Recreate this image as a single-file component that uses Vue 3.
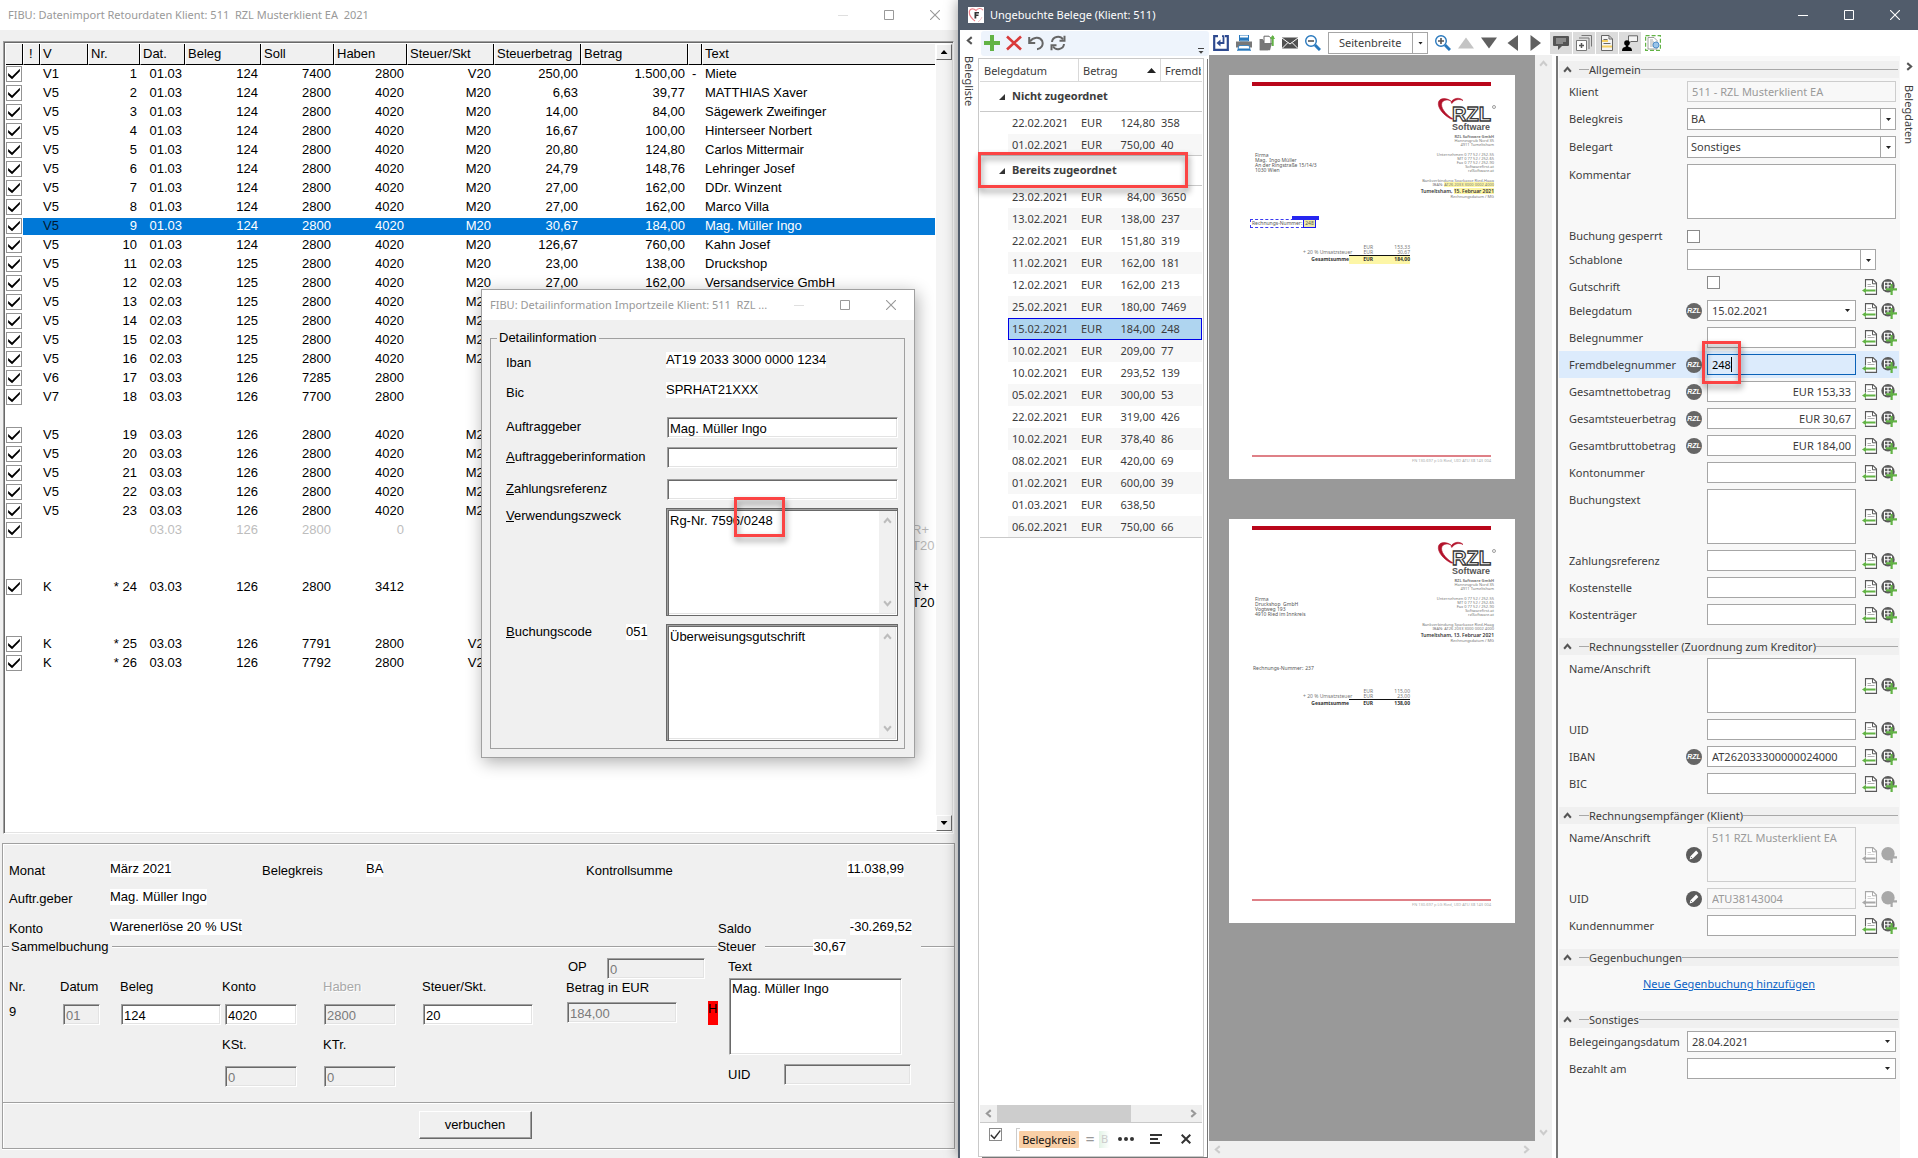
<script setup>
const entry = (v, nr, dat, beleg, soll, haben, skt = '', tax = '', amount = '', sign = '', text = '', extra = {}) =>
  ({ v, nr, dat, beleg, soll, haben, skt, tax, amount, sign, text, lines: 1, ...extra })

const entries = [
  entry('V1', '1', '01.03', '124', '7400', '2800', 'V20', '250,00', '1.500,00', '-', 'Miete'),
  entry('V5', '2', '01.03', '124', '2800', '4020', 'M20', '6,63', '39,77', '', 'MATTHIAS Xaver'),
  entry('V5', '3', '01.03', '124', '2800', '4020', 'M20', '14,00', '84,00', '', 'Sägewerk Zweifinger'),
  entry('V5', '4', '01.03', '124', '2800', '4020', 'M20', '16,67', '100,00', '', 'Hinterseer Norbert'),
  entry('V5', '5', '01.03', '124', '2800', '4020', 'M20', '20,80', '124,80', '', 'Carlos Mittermair'),
  entry('V5', '6', '01.03', '124', '2800', '4020', 'M20', '24,79', '148,76', '', 'Lehringer Josef'),
  entry('V5', '7', '01.03', '124', '2800', '4020', 'M20', '27,00', '162,00', '', 'DDr. Winzent'),
  entry('V5', '8', '01.03', '124', '2800', '4020', 'M20', '27,00', '162,00', '', 'Marco Villa'),
  entry('V5', '9', '01.03', '124', '2800', '4020', 'M20', '30,67', '184,00', '', 'Mag. Müller Ingo', { selected: true }),
  entry('V5', '10', '01.03', '124', '2800', '4020', 'M20', '126,67', '760,00', '', 'Kahn Josef'),
  entry('V5', '11', '02.03', '125', '2800', '4020', 'M20', '23,00', '138,00', '', 'Druckshop'),
  entry('V5', '12', '02.03', '125', '2800', '4020', 'M20', '27,00', '162,00', '', 'Versandservice GmbH'),
  entry('V5', '13', '02.03', '125', '2800', '4020', 'M20'),
  entry('V5', '14', '02.03', '125', '2800', '4020', 'M20'),
  entry('V5', '15', '02.03', '125', '2800', '4020', 'M20'),
  entry('V5', '16', '02.03', '125', '2800', '4020', 'M20'),
  entry('V6', '17', '03.03', '126', '7285', '2800'),
  entry('V7', '18', '03.03', '126', '7700', '2800', '', '', '', '', '', { lines: 2 }),
  entry('V5', '19', '03.03', '126', '2800', '4020', 'M20'),
  entry('V5', '20', '03.03', '126', '2800', '4020', 'M20'),
  entry('V5', '21', '03.03', '126', '2800', '4020', 'M20'),
  entry('V5', '22', '03.03', '126', '2800', '4020', 'M20'),
  entry('V5', '23', '03.03', '126', '2800', '4020', 'M20'),
  entry('', '', '03.03', '126', '2800', '0', '', '', '', '', '', { lines: 3, muted: true, tail: true }),
  entry('K', '* 24', '03.03', '126', '2800', '3412', '', '', '', '', '', { lines: 3, tail: true }),
  entry('K', '* 25', '03.03', '126', '7791', '2800', 'V20'),
  entry('K', '* 26', '03.03', '126', '7792', '2800', 'V20'),
]

const groups = [
  { title: 'Nicht zugeordnet', rows: [['22.02.2021', '124,80', '358'], ['01.02.2021', '750,00', '40']] },
  {
    title: 'Bereits zugeordnet', marked: true,
    rows: [
      ['23.02.2021', '84,00', '3650'], ['13.02.2021', '138,00', '237'], ['22.02.2021', '151,80', '319'],
      ['11.02.2021', '162,00', '181'], ['12.02.2021', '162,00', '213'], ['25.02.2021', '180,00', '7469'],
      ['15.02.2021', '184,00', '248'], ['10.02.2021', '209,00', '77'], ['10.02.2021', '293,52', '139'],
      ['05.02.2021', '300,00', '53'], ['22.02.2021', '319,00', '426'], ['10.02.2021', '378,40', '86'],
      ['08.02.2021', '420,00', '69'], ['01.02.2021', '600,00', '39'], ['01.03.2021', '638,50', ''],
      ['06.02.2021', '750,00', '66'],
    ],
  },
]

const pages = [
  {
    address: ['Firma', 'Mag.  Ingo Müller', 'An der Ringstraße 15/14/3', '1030 Wien'],
    date: '15. Februar 2021', number: '248', marked: true,
    net: '153,33', tax: '30,67', total: '184,00',
  },
  {
    address: ['Firma', 'Druckshop  GmbH', 'Vogtweg 193', '4910 Ried im Innkreis'],
    date: '13. Februar 2021', number: '237', marked: false,
    net: '115,00', tax: '23,00', total: '138,00',
  },
]

const sections = [
  {
    title: 'Allgemein',
    fields: [
      { label: 'Klient', kind: 'text', value: '511 - RZL Musterklient EA', disabled: true },
      { label: 'Belegkreis', kind: 'select', value: 'BA' },
      { label: 'Belegart', kind: 'select', value: 'Sonstiges' },
      { label: 'Kommentar', kind: 'area', value: '' },
      { label: 'Buchung gesperrt', kind: 'check' },
      { label: 'Schablone', kind: 'select', value: '', narrow: true },
      { label: 'Gutschrift', kind: 'check', source: true },
      { label: 'Belegdatum', kind: 'date', value: '15.02.2021', source: true, badge: 'rzl' },
      { label: 'Belegnummer', kind: 'text', value: '', source: true },
      { label: 'Fremdbelegnummer', kind: 'text', value: '248', source: true, badge: 'rzl', active: true },
      { label: 'Gesamtnettobetrag', kind: 'text', value: 'EUR 153,33', source: true, badge: 'rzl', right: true },
      { label: 'Gesamtsteuerbetrag', kind: 'text', value: 'EUR 30,67', source: true, badge: 'rzl', right: true },
      { label: 'Gesamtbruttobetrag', kind: 'text', value: 'EUR 184,00', source: true, badge: 'rzl', right: true },
      { label: 'Kontonummer', kind: 'text', value: '', source: true },
      { label: 'Buchungstext', kind: 'area', value: '', source: true },
      { label: 'Zahlungsreferenz', kind: 'text', value: '', source: true },
      { label: 'Kostenstelle', kind: 'text', value: '', source: true },
      { label: 'Kostenträger', kind: 'text', value: '', source: true },
    ],
  },
  {
    title: 'Rechnungssteller (Zuordnung zum Kreditor)',
    fields: [
      { label: 'Name/Anschrift', kind: 'area', value: '', source: true },
      { label: 'UID', kind: 'text', value: '', source: true },
      { label: 'IBAN', kind: 'text', value: 'AT262033300000024000', source: true, badge: 'rzl' },
      { label: 'BIC', kind: 'text', value: '', source: true },
    ],
  },
  {
    title: 'Rechnungsempfänger (Klient)',
    fields: [
      { label: 'Name/Anschrift', kind: 'area', value: '511 RZL Musterklient EA', source: true, badge: 'edit', disabled: true },
      { label: 'UID', kind: 'text', value: 'ATU38143004', source: true, badge: 'edit', disabled: true },
      { label: 'Kundennummer', kind: 'text', value: '', source: true },
    ],
  },
  { title: 'Gegenbuchungen', link: 'Neue Gegenbuchung hinzufügen', fields: [] },
  {
    title: 'Sonstiges',
    fields: [
      { label: 'Belegeingangsdatum', kind: 'date', value: '28.04.2021' },
      { label: 'Bezahlt am', kind: 'date', value: '' },
    ],
  },
]
</script>

<template>
  <svg class="defs" width="0" height="0" aria-hidden="true">
    <symbol id="i-min" viewBox="0 0 10 10"><path d="M0 5.5h10" stroke="currentColor" /></symbol>
    <symbol id="i-max" viewBox="0 0 10 10"><path d="M.5.5h9v9h-9z" fill="none" stroke="currentColor" /></symbol>
    <symbol id="i-close" viewBox="0 0 10 10"><path d="M0 0l10 10M10 0L0 10" fill="none" stroke="currentColor" stroke-width="1.1" /></symbol>
    <symbol id="i-chev" viewBox="0 0 8 8"><path d="M1 6l3-3.5L7 6" fill="none" stroke="currentColor" stroke-width="1.8" /></symbol>
    <symbol id="i-doc" viewBox="0 0 16 16">
      <path d="M3.500 8.500V.6h7.500l3.500 3.500v11.300h-11v-1.200" fill="#fff" stroke="currentColor" stroke-width="1.100" />
      <path d="M10.500.8v4h3.800" fill="none" stroke="currentColor" />
      <path d="M5.500 5.500h3.500M5.500 7.500h7" stroke="currentColor" stroke-width=".7" opacity=".7" />
      <path class="accent" d="M0 11.500l4-2.700v1.800h9.500v1.800H4v1.800z" />
    </symbol>
    <symbol id="i-globe" viewBox="0 0 16 16">
      <circle cx="7" cy="6.800" r="6.700" fill="currentColor" />
      <path class="mesh" d="M3.500 3.200h7v7h-7zM3.500 6.700h7M7 3.200v7" fill="none" stroke-width="1.100" />
      <path class="accent" d="M9.500 5h2.200v4.300H16v2.200h-4.300V16H9.500v-4.500H5V9.300h4.500z" />
    </symbol>
    <symbol id="i-edit" viewBox="0 0 16 16">
      <circle cx="8" cy="8" r="8" fill="#5c5c5c" />
      <path d="M3.600 12.400l.9-3.200 5.600-5.600 2.300 2.300-5.600 5.600z" fill="#fff" />
      <path d="M4.800 9.800l1.500 1.500" stroke="#5c5c5c" stroke-width=".8" />
    </symbol>
  </svg>

  <div class="desktop">
    <main class="fibu">
      <header class="titlebar">
        <h1>FIBU: Datenimport Retourdaten Klient: 511&nbsp; RZL Musterklient EA&nbsp; 2021</h1>
        <div class="winbtns">
          <button type="button" class="faint" aria-label="Minimieren"><svg><use href="#i-min" /></svg></button>
          <button type="button" aria-label="Maximieren"><svg><use href="#i-max" /></svg></button>
          <button type="button" aria-label="Schließen"><svg><use href="#i-close" /></svg></button>
        </div>
      </header>

      <div class="fibu-body">
        <div class="frame">
          <div class="frame-scroll">
            <table class="entries">
              <colgroup>
                <col class="c-check" /><col class="c-flag" /><col class="c-v" /><col class="c-nr" /><col class="c-dat" />
                <col class="c-beleg" /><col class="c-acct" /><col class="c-acct" /><col class="c-tax" /><col class="c-tax" />
                <col class="c-amount" /><col class="c-sign" /><col />
              </colgroup>
              <thead>
                <tr>
                  <th></th><th class="flag">!</th><th>V</th><th>Nr.</th><th>Dat.</th><th>Beleg</th><th>Soll</th><th>Haben</th>
                  <th>Steuer/Skt</th><th>Steuerbetrag</th><th>Betrag</th><th></th><th>Text</th>
                </tr>
              </thead>
              <tbody>
                <tr v-for="(e, i) in entries" :key="i" :class="['l' + e.lines, { selected: e.selected, muted: e.muted }]">
                  <td class="tick"><input type="checkbox" class="box" checked :aria-label="'Zeile ' + (i + 1)" /></td>
                  <td></td>
                  <td class="v">{{ e.v }}</td>
                  <td class="n">{{ e.nr }}</td>
                  <td class="n">{{ e.dat }}</td>
                  <td class="n">{{ e.beleg }}</td>
                  <td class="n">{{ e.soll }}</td>
                  <td class="n">{{ e.haben }}</td>
                  <td class="n">{{ e.skt }}</td>
                  <td class="n">{{ e.tax }}</td>
                  <td class="n">{{ e.amount }}</td>
                  <td class="sign">{{ e.sign }}</td>
                  <td>{{ e.text }}<span v-if="e.tail" class="tail">R+<br />T20</span></td>
                </tr>
              </tbody>
            </table>
          </div>
          <div class="classic-scroll">
            <button type="button" class="up" aria-label="Nach oben"></button>
            <button type="button" class="down" aria-label="Nach unten"></button>
          </div>
        </div>

        <section class="booking">
          <div class="summary">
            <span>Monat</span><b><mark>März 2021</mark></b>
            <span>Belegkreis</span><b><mark>BA</mark></b>
            <span>Kontrollsumme</span><b class="sum"><mark>11.038,99</mark></b>
            <span>Auftr.geber</span><b class="wide"><mark>Mag. Müller Ingo</mark></b>
            <span>Konto</span><b class="mid"><mark>Warenerlöse 20 % USt</mark></b>
            <span class="saldo">Saldo</span><b class="end"><mark>-30.269,52</mark></b>
          </div>
          <div class="rule">
            <i class="stub"></i><span>Sammelbuchung</span><i class="grow"></i>
            <span class="tax-label">Steuer</span><i class="short"></i><mark>30,67</mark><span class="gap"></span><i class="rest"></i>
          </div>
          <form class="posting" @submit.prevent>
            <div class="f f-nr"><label>Nr.</label><output>9</output></div>
            <div class="f f-date"><label for="p-datum">Datum</label><input id="p-datum" class="sunk" value="01" disabled /></div>
            <div class="f f-beleg"><label for="p-beleg">Beleg</label><input id="p-beleg" class="sunk" value="124" /></div>
            <div class="f f-konto">
              <label for="p-konto">Konto</label><input id="p-konto" class="sunk" value="4020" />
              <label for="p-kst" class="second">KSt.</label><input id="p-kst" class="sunk" value="0" disabled />
            </div>
            <div class="f f-haben">
              <label for="p-haben" class="off">Haben</label><input id="p-haben" class="sunk" value="2800" disabled />
              <label for="p-ktr" class="second">KTr.</label><input id="p-ktr" class="sunk" value="0" disabled />
            </div>
            <div class="f f-skt"><label for="p-skt">Steuer/Skt.</label><input id="p-skt" class="sunk" value="20" /></div>
            <div class="f-amount">
              <div class="op"><label for="p-op">OP</label><input id="p-op" class="sunk" value="0" disabled /></div>
              <label for="p-betrag">Betrag in EUR</label>
              <input id="p-betrag" class="sunk" value="184,00" disabled />
            </div>
            <span class="side">H</span>
            <div class="f-text">
              <label for="p-text">Text</label>
              <textarea id="p-text" class="sunk">Mag. Müller Ingo</textarea>
              <div class="uid"><label for="p-uid">UID</label><input id="p-uid" class="sunk" disabled /></div>
            </div>
          </form>
          <div class="actions"><button type="button">verbuchen</button></div>
        </section>
      </div>

      <section class="dialog" role="dialog" aria-label="Detailinformation">
        <header class="titlebar">
          <h2>FIBU: Detailinformation Importzeile Klient: 511&nbsp; RZL ...</h2>
          <div class="winbtns">
            <button type="button" class="faint" aria-label="Minimieren"><svg><use href="#i-min" /></svg></button>
            <button type="button" aria-label="Maximieren"><svg><use href="#i-max" /></svg></button>
            <button type="button" aria-label="Schließen"><svg><use href="#i-close" /></svg></button>
          </div>
        </header>
        <fieldset>
          <legend>Detailinformation</legend>
          <div class="d plain first"><span>Iban</span><p><mark>AT19 2033 3000 0000 1234</mark></p></div>
          <div class="d plain last"><span>Bic</span><p><mark>SPRHAT21XXX</mark></p></div>
          <div class="d"><label for="d-auf">Auftraggeber</label><input id="d-auf" class="sunk" value="Mag. Müller Ingo" /></div>
          <div class="d"><label for="d-inf"><u>A</u>uftraggeberinformation</label><input id="d-inf" class="sunk" /></div>
          <div class="d ref"><label for="d-ref"><u>Z</u>ahlungsreferenz</label><input id="d-ref" class="sunk" /></div>
          <div class="d memo">
            <label for="d-zweck"><u>V</u>erwendungszweck</label>
            <div class="scrollbox">
              <textarea id="d-zweck">Rg-Nr. 7596/0248</textarea>
              <span class="bar"><svg><use href="#i-chev" /></svg><svg class="flip"><use href="#i-chev" /></svg></span>
              <span class="hilite h-ref"></span>
            </div>
          </div>
          <div class="d memo code">
            <label for="d-code"><u>B</u>uchungscode</label><mark class="code-no">051</mark>
            <div class="scrollbox">
              <textarea id="d-code">Überweisungsgutschrift</textarea>
              <span class="bar"><svg><use href="#i-chev" /></svg><svg class="flip"><use href="#i-chev" /></svg></span>
            </div>
          </div>
        </fieldset>
      </section>
    </main>

    <div class="belege">
      <header class="titlebar dark">
        <svg class="app" viewBox="0 0 16 16">
          <path d="M0 0h16v16H0z" fill="#fff" />
          <path d="M7 14C3 11 .8 7 1.500 4 2.200 1.500 5.500 1 8 3.500 9.500 1 13.500.8 15 3.200" fill="none" stroke="#ee7f88" stroke-width="1.200" />
          <path d="M6.500 5h4.500v1.400H8.300v1.200h2.200V9H8.300v2.500H6.500z" fill="#333" />
          <path d="M14 10q-1 3-4 5" fill="none" stroke="#f3b0b5" stroke-width=".8" />
        </svg>
        <h1>Ungebuchte Belege (Klient: 511)</h1>
        <div class="winbtns">
          <button type="button" aria-label="Minimieren"><svg><use href="#i-min" /></svg></button>
          <button type="button" aria-label="Maximieren"><svg><use href="#i-max" /></svg></button>
          <button type="button" aria-label="Schließen"><svg><use href="#i-close" /></svg></button>
        </div>
      </header>

      <div class="belege-body">
        <nav class="strip left"><svg class="turn-l"><use href="#i-chev" /></svg><span>Belegliste</span></nav>

        <section class="list">
          <div class="tools">
            <button type="button" aria-label="Neu"><svg viewBox="0 0 16 16"><path d="M6 0h4v6h6v4h-6v6H6v-6H0V6h6z" fill="#62b345" /></svg></button>
            <button type="button" aria-label="Löschen"><svg viewBox="0 0 16 16"><path d="M1 1.500l14 13M15 1.500l-14 13" stroke="#d93a3a" stroke-width="2.600" /></svg></button>
            <button type="button" aria-label="Rückgängig"><svg viewBox="0 0 16 16"><path d="M2 6.500C5 2 12 1 14.200 6c1.500 4-1 8-5.200 8.200" fill="none" stroke="#666" stroke-width="2" /><path d="M1.200 2v6h6" fill="none" stroke="#666" stroke-width="2" /></svg></button>
            <button type="button" aria-label="Aktualisieren"><svg viewBox="0 0 16 16"><path d="M2 7C2.500 1.500 10 0 13 4.500M14 9c-.5 5.500-8 7-11 2.500" fill="none" stroke="#666" stroke-width="2" /><path d="M14.500.8v5h-5M1.500 15.200v-5h5" fill="none" stroke="#666" stroke-width="2" /></svg></button>
            <svg class="more" viewBox="0 0 6 6"><path d="M0 .5h6" stroke="#444" /><path d="M.5 3h5L3 5.800z" fill="#444" /></svg>
          </div>
          <div class="grid">
            <div class="grid-head"><span>Belegdatum</span><span>Betrag<i></i></span><span>Fremdbelegnummer</span></div>
            <div v-for="g in groups" :key="g.title" class="group">
              <h3>{{ g.title }}<span v-if="g.marked" class="hilite h-group"></span></h3>
              <table>
                <tbody>
                  <tr v-for="(r, i) in g.rows" :key="i" :class="{ current: r[2] === '248' }">
                    <td class="date">{{ r[0] }}</td><td class="cur">EUR</td><td class="amt">{{ r[1] }}</td><td>{{ r[2] }}</td>
                  </tr>
                </tbody>
              </table>
            </div>
            <div class="hscroll"><svg class="turn-l"><use href="#i-chev" /></svg><i></i><svg class="turn-r"><use href="#i-chev" /></svg></div>
            <div class="filter">
              <input type="checkbox" class="box thin" checked aria-label="Filter aktiv" />
              <i class="bracket"></i><span class="tag">Belegkreis</span><span class="eq">=</span><span class="ghost">B</span>
              <button type="button" aria-label="Mehr"><svg viewBox="0 0 16 10"><circle cx="2" cy="5" r="2" /><circle cx="8" cy="5" r="2" /><circle cx="14" cy="5" r="2" /></svg></button>
              <button type="button" aria-label="Editor"><svg viewBox="0 0 12 10"><path d="M0 0h12v2H0zM0 4h8v2H0zM0 8h10v2H0z" /></svg></button>
              <button type="button" aria-label="Filter löschen"><svg viewBox="0 0 10 10"><path d="M.7.7l8.600 8.600M9.300.7L.7 9.300" stroke="#333" stroke-width="2" /></svg></button>
            </div>
          </div>
        </section>

        <div class="work">
          <div class="view-tools">
            <button type="button" aria-label="Import"><svg viewBox="0 0 16 16"><path d="M5 1.200H1.200v13.600h13.600V1.200H12" fill="none" stroke="#2e4a8f" stroke-width="2.200" /><path d="M9 1.200h1.500V8H7" fill="none" stroke="#2e4a8f" stroke-width="1.800" /><path d="M3.500 8l4-3.500v7z" fill="#2e4a8f" /></svg></button>
            <button type="button" aria-label="Drucken"><svg viewBox="0 0 16 16"><path d="M3.500 0h9v6h-9z" fill="#fff" stroke="#2878bd" /><path d="M4 2.500h8v3H4z" fill="#2878bd" /><path d="M0 6.500h16v6H0z" fill="#777" /><path d="M3 10.500h10L14.500 16h-13z" fill="#fff" stroke="#2878bd" stroke-width=".8" /><path d="M2 13.500h12v2H2z" fill="#2878bd" /></svg></button>
            <button type="button" aria-label="Export"><svg viewBox="0 0 16 16"><path d="M.6 4h3l1 1.500H9v9.800H.6z" fill="#777" /><path d="M5 1.200h5l2 2v6H5z" fill="#fff" stroke="#666" /><path d="M.8 15.200L3 8h10l-2 7.200z" fill="#777" /><path d="M13.700 1v10" stroke="#62b345" stroke-width="2" /><path d="M11 4l2.700-4L16 4z" fill="#62b345" /></svg></button>
            <button type="button" aria-label="E-Mail"><svg viewBox="0 0 16 16"><path d="M0 2.500h16v11H0z" fill="#505050" /><path d="M0 3l8 6 8-6M0 13.500l6-6M16 13.500l-6-6" fill="none" stroke="#fff" /></svg></button>
            <button type="button" aria-label="Verkleinern"><svg viewBox="0 0 16 16"><circle cx="6" cy="6" r="5.300" fill="#fff" stroke="#2878bd" stroke-width="1.400" /><path d="M3 6h6" stroke="#555" stroke-width="1.600" /><path d="M10 10l5 5" stroke="#2878bd" stroke-width="3" /></svg></button>
            <span class="pick zoom"><select aria-label="Zoom"><option>Seitenbreite</option></select></span>
            <button type="button" aria-label="Vergrößern"><svg viewBox="0 0 16 16"><circle cx="6" cy="6" r="5.300" fill="#fff" stroke="#2878bd" stroke-width="1.400" /><path d="M3 6h6M6 3v6" stroke="#555" stroke-width="1.600" /><path d="M10 10l5 5" stroke="#2878bd" stroke-width="3" /></svg></button>
            <button type="button" aria-label="Erste Seite"><svg viewBox="0 0 16 16"><path d="M0 13.500L8 2.500l8 11z" fill="#c4c4c4" /></svg></button>
            <button type="button" aria-label="Nächste Seite"><svg viewBox="0 0 16 16"><path d="M0 2.500h16l-8 11z" fill="#606060" /></svg></button>
            <button type="button" aria-label="Zurück"><svg viewBox="0 0 16 16"><path d="M14 0v16L3.500 8z" fill="#606060" /></svg></button>
            <button type="button" aria-label="Vor"><svg viewBox="0 0 16 16"><path d="M3.500 0v16L14 8z" fill="#606060" /></svg></button>
            <button type="button" class="on lead" aria-label="Kommentare"><svg viewBox="0 0 16 16"><path d="M1 1h14q1 0 1 1v8q0 1-1 1H9l-4 4v-4H1q-1 0-1-1V2q0-1 1-1z" fill="#555" /><path d="M3 4h10M3 6h10M3 8h7" stroke="#ddd" stroke-width=".8" /></svg></button>
            <button type="button" class="on" aria-label="Stapel"><svg viewBox="0 0 16 16"><path d="M5.500.5h10v11M3 3h10v11" fill="none" stroke="#777" /><path d="M.5 5.500h10v10H.5z" fill="#fff" stroke="#777" /><path d="M3 10.500h5M5.500 8v5" stroke="#555" stroke-width="1.500" /></svg></button>
            <button type="button" class="on" aria-label="Markierungen"><svg viewBox="0 0 16 16"><path d="M2.500.5h7.500l3.500 3.500v11.500h-11z" fill="#f4f4f4" stroke="#666" /><path d="M3 5h6v2H3zM3 10.500h10v2H3z" fill="#f4cf62" /><path d="M10 .5V4h3.500M4.500 4.500h4M4.500 8.500h7" fill="none" stroke="#666" /></svg></button>
            <button type="button" class="on" aria-label="Benutzer"><svg viewBox="0 0 16 16"><path d="M6.500 6.500V.8h9v5.700H9L6 9" fill="#f3f3f3" stroke="#666" /><circle cx="5" cy="8" r="2.800" /><path d="M0 16q0-4 3.500-4L4 10h2l.5 2Q10 12 10 16z" /></svg></button>
            <button type="button" aria-label="Bereich"><svg viewBox="0 0 16 16"><path d="M.6.6h14.800v14.800H.6z" fill="none" stroke="#62b345" stroke-width="1.200" stroke-dasharray="4 2" /><path d="M3 2.500h6l3 3v8.500H3z" fill="#fff" stroke="#888" stroke-width=".8" /><path d="M5 5h3M5 7h4M5 9h3M5 11h3" stroke="#888" stroke-width=".7" /><circle cx="11" cy="10" r="3" fill="#9bc4e8" stroke="#4f8fcb" /></svg></button>
          </div>

          <div class="panes">
            <section class="viewer">
              <div class="canvas">
                <article v-for="p in pages" :key="p.number" class="page">
                  <div class="redbar"></div>
                  <svg class="logo" viewBox="0 0 60 34">
                    <path d="M14 22C7 18.500 0 11 1.500 5 3 .5 10 .5 14.500 4.500 12 2.400 7 2.200 5 5.500 3 10 8 17 16 22z" fill="#b3132b" stroke="#b3132b" stroke-width=".6" />
                    <path d="M14 5C17 .5 23 .2 26 3.500 22.500 1.800 18 2 14.800 6.500z" fill="#b3132b" stroke="#b3132b" stroke-width=".6" />
                    <text x="15" y="24" font-family="Liberation Sans, Arial, sans-serif" font-size="20" font-weight="700" fill="#fff" stroke="#3a3a3a" stroke-width="1.300">RZL</text>
                    <text x="15" y="33" font-family="Liberation Sans, Arial, sans-serif" font-size="9" font-weight="700" fill="#555">Software</text>
                    <circle cx="57" cy="10" r="1.500" fill="none" stroke="#777" stroke-width=".7" />
                  </svg>
                  <div class="page-head">
                    <address><span v-for="a in p.address" :key="a">{{ a }}</span></address>
                    <div class="sender">
                      <p><b>RZL Software GmbH</b><br />Hannesgrub Nord 35<br />4911 Tumeltsham</p>
                      <p>Unternehmen 0 77 52 / 252-55<br />MT 0 77 52 / 252-65<br />Fax 0 77 52 / 252-90<br />Softwarefirst.at<br />rzlSoftware.at</p>
                      <p>Bankverbindung Sparkasse Ried-Haag<br />IBAN: <em :class="{ glow: p.marked }">AT26 2033 3000 0002 4000</em></p>
                      <strong>Tumeltsham, <em :class="{ glow: p.marked }">{{ p.date }}</em></strong>
                      <small>Rechnungsdatum / MG</small>
                    </div>
                  </div>
                  <div :class="['refno', { marked: p.marked }]"><span>Rechnungs-Nummer:</span><em>{{ p.number }}</em></div>
                  <table class="totals">
                    <tbody>
                      <tr><td></td><td>EUR</td><td>{{ p.net }}</td></tr>
                      <tr class="tax"><td>+ 20 % Umsatzsteuer</td><td>EUR</td><td>{{ p.tax }}</td></tr>
                      <tr :class="['total', { glowing: p.marked }]"><td>Gesamtsumme</td><td>EUR</td><td>{{ p.total }}</td></tr>
                    </tbody>
                  </table>
                  <footer>FN 130.697 p LG Ried, UID ATU 38 143 004</footer>
                </article>
              </div>
              <div class="vbar"><svg><use href="#i-chev" /></svg><svg class="flip"><use href="#i-chev" /></svg></div>
              <div class="hbar"><svg class="turn-l"><use href="#i-chev" /></svg><svg class="turn-r"><use href="#i-chev" /></svg></div>
            </section>

            <form class="details" @submit.prevent>
              <section v-for="(s, si) in sections" :key="s.title">
                <h3><svg><use href="#i-chev" /></svg><i></i>{{ s.title }}<i class="grow"></i></h3>
                <p v-if="s.link" class="linkrow"><a href="#">{{ s.link }}</a></p>
                <div v-for="(f, fi) in s.fields" :key="f.label" :class="['row', f.kind, { source: f.source, active: f.active, narrow: f.narrow, off: f.disabled, right: f.right }]">
                  <label :for="`f-${si}-${fi}`">{{ f.label }}</label>
                  <span v-if="f.badge === 'rzl'" class="badge rzl">RZL</span>
                  <svg v-else-if="f.badge" class="badge"><use href="#i-edit" /></svg>
                  <span v-else-if="f.source" class="badge"></span>
                  <div v-if="f.kind === 'check'" class="ctl"><input :id="`f-${si}-${fi}`" type="checkbox" class="box thin" /></div>
                  <div v-else-if="f.kind === 'select'" class="ctl pick"><select :id="`f-${si}-${fi}`"><option>{{ f.value }}</option></select></div>
                  <div v-else-if="f.kind === 'area'" class="ctl"><textarea :id="`f-${si}-${fi}`" :disabled="f.disabled" :value="f.value"></textarea></div>
                  <div v-else class="ctl"><input :id="`f-${si}-${fi}`" type="text" :value="f.value" :disabled="f.disabled" /><template v-if="f.active"><i class="caret"></i><span class="hilite h-no"></span></template></div>
                  <template v-if="f.source">
                    <button type="button" aria-label="Aus Beleg übernehmen"><svg><use href="#i-doc" /></svg></button>
                    <button type="button" aria-label="Zuordnung hinzufügen"><svg><use href="#i-globe" /></svg></button>
                  </template>
                </div>
              </section>
            </form>

            <nav class="strip right"><svg class="turn-r"><use href="#i-chev" /></svg><span>Belegdaten</span></nav>
          </div>
        </div>
      </div>
    </div>
  </div>
</template>

<style>
html, body { margin: 0; background: #f0f0f0; }
</style>

<style scoped>
* { box-sizing: border-box; }
.defs { position: absolute; }
.accent { fill: var(--accent, #62b345); }
.mesh { stroke: var(--mesh, #fff); }
button { padding: 0; border: 0; background: none; font: inherit; color: inherit; }
input, textarea, select { font: inherit; color: inherit; margin: 0; border-radius: 0; outline: 0; min-width: 0; }
textarea { resize: none; overflow: hidden; display: block; }
h1, h2, h3, p { margin: 0; font-weight: 400; font-size: inherit; }
mark { background: #fff; color: inherit; display: inline-block; height: 16px; line-height: 16px; }

.desktop { display: flex; min-height: 100vh; }

/* window chrome */
.titlebar { display: flex; align-items: center; height: 30px; padding-left: 8px; background: #fff; color: #999; font: 11px/16px "Noto Sans", "Segoe UI", sans-serif; white-space: nowrap; }
.titlebar h1, .titlebar h2 { flex: 1; min-width: 0; overflow: hidden; }
.winbtns { display: flex; }
.winbtns button { width: 46px; height: 28px; display: flex; align-items: center; justify-content: center; }
.winbtns svg { width: 10px; height: 10px; }
.winbtns .faint { opacity: .3; }
.titlebar.dark { background: #515c6b; color: #fff; }
.titlebar.dark .app { width: 16px; height: 16px; margin-right: 6px; }

.hilite { position: absolute; border: 3px solid #fb4444; filter: drop-shadow(1px 4px 3px rgba(0, 0, 0, .45)); pointer-events: none; }

.box { appearance: none; width: 16px; height: 16px; border: 1px solid #949494; background: #fff; display: block; flex: none; }
.box:checked::before { content: ""; display: block; width: 14px; height: 14px; background: #000; clip-path: polygon(8% 42%, 36% 68%, 92% 12%, 92% 30%, 36% 88%, 8% 62%); }
.box.thin { width: 13px; height: 13px; border-color: #8a8a8a; }
.box.thin:checked::before { width: 11px; height: 11px; background: #333; clip-path: polygon(10% 48%, 38% 76%, 90% 8%, 98% 18%, 40% 96%, 4% 62%); }

/* import window */
.fibu { position: relative; flex: 1 1 calc(50% - 1px); min-width: 0; display: flex; flex-direction: column; background: #f0f0f0; font: 13px/16px "Liberation Sans", Arial, sans-serif; color: #000; }
.fibu-body { flex: 1; display: flex; flex-direction: column; padding: 11px 3px 9px 2px; }
.sunk { height: 21px; border: 1px solid; border-color: #a0a0a0 #fff #fff #a0a0a0; box-shadow: inset 1px 1px #696969, inset -1px -1px #e3e3e3; background: #fff; padding: 1px 2px 0; }
.sunk:disabled { background: #f0f0f0; color: #7a7a7a; }

.frame { flex: 1; display: flex; margin: 0 1px; border: 1px solid; border-color: #a0a0a0 #fff #fff #a0a0a0; box-shadow: inset 1px 1px #696969, inset -1px -1px #e3e3e3; background: #fff; padding: 2px 1px 2px 2px; }
.frame-scroll { flex: 1; min-width: 0; }
.entries { width: 100%; table-layout: fixed; border-collapse: separate; border-spacing: 0; }
.c-check { width: 17px; } .c-flag { width: 17px; } .c-v { width: 48px; } .c-nr { width: 52px; } .c-dat { width: 45px; }
.c-beleg { width: 76px; } .c-acct { width: 73px; } .c-tax { width: 87px; } .c-amount { width: 107px; } .c-sign { width: 14px; }
.entries th { height: 21px; padding: 0 0 0 2px; text-align: left; font-weight: 400; background: #f0f0f0; border-right: 1px solid #000; border-bottom: 1px solid #000; white-space: nowrap; overflow: hidden; }
.entries th + th { border-left: 1px solid #fff; }
.entries th.flag { padding-left: 5px; }
.entries th:last-child { border-right: 0; }
.entries thead::after { content: ""; display: block; height: 1px; }
.entries td { height: 19px; padding: 0 3px; line-height: 16px; vertical-align: top; border-bottom: 2px solid #fff; white-space: nowrap; }
.entries .l2 td { height: 38px; }
.entries .l3 td { height: 57px; }
.entries td.tick { padding: 0; }
.entries .n { text-align: right; padding-right: 3px; }
.entries .sign { padding-left: 4px; }
.entries .selected td:not(.tick) { background: #0078d7; color: #fff; }
.entries .selected td.v { color: #001a33; }
.entries .muted td { color: #bdbdbd; }
.tail { display: block; width: 22px; margin-left: auto; margin-right: -2px; }
.classic-scroll { width: 16px; margin-left: 1px; display: flex; flex-direction: column; justify-content: space-between; background: #f4f4f4; }
.classic-scroll button { width: 16px; height: 16px; background: #f0f0f0; border: 1px solid; border-color: #fff #696969 #696969 #fff; display: flex; align-items: center; justify-content: center; }
.classic-scroll button::before { content: ""; width: 7px; height: 4px; background: #000; clip-path: polygon(50% 0, 100% 100%, 0 100%); }
.classic-scroll .down::before { clip-path: polygon(0 0, 100% 0, 50% 100%); }

.booking { margin-top: 9px; border: 1px solid #a0a0a0; box-shadow: inset 1px 1px #fff, 0 1px #fff; }
.summary { display: grid; grid-template-columns: 101px 152px 104px 220px 132px minmax(0, 1fr); grid-template-rows: 28px 30px 20px; padding: 17px 0 0 6px; }
.summary span { padding-top: 2px; }
.summary b { font-weight: 400; }
.summary .sum { text-align: right; grid-column: 6; padding-right: 50px; }
.summary .wide { grid-column: 2 / -1; }
.summary .mid { grid-column: 2 / 5; }
.summary .saldo { grid-column: 5; padding-left: 132px; }
.summary .end { text-align: right; padding-right: 42px; }
.rule { display: flex; align-items: center; height: 16px; }
.rule i { height: 2px; background: #a0a0a0; border-bottom: 1px solid #fff; }
.rule .stub { width: 6px; margin-right: 2px; }
.rule .grow { flex: 1; margin-left: 3px; }
.rule .tax-label { width: 48px; }
.rule .short { width: 48px; }
.rule .gap { width: 75px; }
.rule .rest { width: 33px; }
.posting { display: flex; height: 147px; padding-left: 6px; }
.posting label { display: block; }
.f { padding-top: 24px; }
.f label { height: 25px; }
.f label.second { margin-top: 12px; height: 29px; }
.f .off { color: #a8a8a8; text-shadow: 1px 1px #fff; }
.f-nr { width: 51px; }
.f-date { width: 60px; } .f-date input { width: 37px; margin-left: 3px; }
.f-beleg { width: 102px; } .f-beleg input { width: 100px; margin-left: 1px; }
.f-konto { width: 101px; } .f-konto input { width: 72px; margin-left: 3px; }
.f-haben { width: 99px; } .f-haben input { width: 72px; margin-left: 1px; }
.f-skt { flex: 1; } .f-skt input { width: 110px; margin-left: 1px; }
.f input, .f-amount > input { display: block; }
.f-amount { width: 142px; padding-top: 3px; }
.f-amount > label { height: 23px; padding-top: 1px; }
.f-amount > input { width: 110px; margin-left: 1px; }
.op { display: flex; height: 21px; }
.op label { width: 41px; padding: 1px 0 0 2px; }
.op input { width: 98px; }
.side { width: 10px; height: 24px; margin-top: 46px; background: #f00; }
.f-text { width: 236px; padding: 4px 0 0 10px; }
.f-text > label { height: 19px; }
.f-text textarea { width: 173px; height: 77px; padding: 2px; margin-left: 1px; }
.uid { display: flex; margin-top: 9px; }
.uid label { width: 56px; padding-top: 3px; }
.uid input { width: 127px; }
.actions { height: 46px; border-top: 1px solid #a0a0a0; box-shadow: inset 0 1px #fff; display: flex; justify-content: center; padding-top: 8px; }
.actions button { width: 113px; height: 28px; margin-right: 7px; background: #f0f0f0; border: 1px solid; border-color: #fff #696969 #696969 #fff; box-shadow: inset -1px -1px #a0a0a0; }

/* detail dialog floating over the import window */
.dialog { position: absolute; left: 481px; top: 289px; width: 434px; height: 469px; background: #f0f0f0; border: 1px solid #a0a0a0; box-shadow: 2px 4px 16px rgba(0, 0, 0, .32); }
fieldset { margin: 10px 9px 0 8px; padding: 0 6px 0 15px; height: 419px; border: 1px solid #a0a0a0; min-width: 0; }
legend { margin-left: -9px; padding: 0 2px; }
.d { display: flex; height: 30px; }
.d > label, .d > span { width: 160px; padding-top: 2px; }
.d.plain > span { padding-top: 3px; }
.d.first { margin-top: 6px; }
.d.last { margin-bottom: 5px; }
.d .sunk { flex: 1; margin-left: 1px; }
.d.ref { margin-top: 2px; height: 29px; }
.d.memo { height: 116px; position: relative; }
.d.memo > label { padding-top: 0; }
.scrollbox { position: relative; flex: 1; height: 108px; display: flex; border: 1px solid #696969; outline: 1px solid #f0f0f0; box-shadow: inset 1px 1px #a0a0a0, inset 2px 2px #696969, inset -1px -1px #fff, inset -2px -2px #e3e3e3; background: #fff; padding: 2px; }
.code .scrollbox { height: 117px; }
.scrollbox textarea { flex: 1; border: 0; background: none; padding: 2px 1px; }
.scrollbox .bar { width: 16px; background: #f0f0f0; display: flex; flex-direction: column; justify-content: space-between; align-items: center; padding: 5px 0; color: #bcbcbc; }
.bar svg { width: 9px; height: 9px; }
.flip { transform: rotate(180deg); }
.turn-l { transform: rotate(-90deg); }
.turn-r { transform: rotate(90deg); }
.d.code > label { width: 120px; }
.d.code .code-no { width: 21px; margin-right: 19px; }
.h-ref { left: 67px; top: -12px; width: 51px; height: 40px; }

/* documents window */
.belege { position: relative; flex: 1 1 calc(50% + 1px); min-width: 0; display: flex; flex-direction: column; background: #fff; border-left: 2px solid #515c6b; box-shadow: 0 0 13px rgba(0, 0, 0, .4); font: 11px/16px "Noto Sans", "Segoe UI", sans-serif; color: #3c3c3c; }
.belege-body { flex: 1; display: flex; min-height: 0; }
.strip { width: 18px; display: flex; flex-direction: column; align-items: center; color: #555; background: #fff; }
.strip svg { width: 9px; height: 9px; }
.strip span { writing-mode: vertical-rl; color: #3c3c3c; }
.strip.left { padding-top: 6px; }
.strip.left span { margin-top: 11px; }
.strip.right { padding-top: 7px; }
.strip.right span { margin-top: 14px; }

.list { width: 231px; display: flex; flex-direction: column; padding-bottom: 1px; }
.tools { display: flex; gap: 6px; height: 25px; margin: 1px 0 2px 3px; padding: 4px 3px 0; background: #eef4fc; border-radius: 3px; }
.tools button { width: 16px; height: 16px; }
.tools svg, .view-tools svg { width: 16px; height: 16px; display: block; }
.tools svg.more { width: 6px; height: 6px; margin: 13px 2px 0 auto; }
.grid { flex: 1; display: flex; flex-direction: column; border: 1px solid #c9c9c9; margin-right: 5px; padding: 0 1px; box-shadow: 3px 0 #fff, 4px 1px #777; }
.grid-head { display: flex; height: 23px; border-bottom: 1px solid #d9d9d9; overflow: hidden; }
.grid-head span { padding: 4px 4px 0; border-right: 1px solid #d9d9d9; overflow: hidden; }
.grid-head span:nth-child(1) { width: 99px; }
.grid-head span:nth-child(2) { width: 82px; display: flex; justify-content: space-between; }
.grid-head span:nth-child(3) { flex: 1; border: 0; padding-right: 0; margin-right: 1px; }
.grid-head i { width: 9px; height: 5px; margin-top: 5px; background: #222; clip-path: polygon(50% 0, 100% 100%, 0 100%); }
.group { border-bottom: 1px solid #c9c9c9; }
.group h3 { position: relative; height: 30px; padding: 6px 0 0 32px; font-weight: 700; border-bottom: 1px solid #c9c9c9; display: flex; }
.group h3::before { content: ""; position: absolute; left: 19px; top: 12px; width: 6px; height: 6px; background: #333; clip-path: polygon(100% 0, 100% 100%, 0 100%); }
.group table { width: calc(100% - 28px); margin-left: 28px; border-collapse: collapse; table-layout: fixed; }
.group td { height: 22px; padding: 0; white-space: nowrap; }
.group tr:last-child td { height: 21px; }
.group td.date { width: 73px; padding-left: 4px; }
.group td.cur { width: 30px; }
.group td.amt { width: 50px; padding-right: 6px; text-align: right; }
.group tr:nth-child(even) { background: #f7f7f7; }
.group tr.current { background: #afd5f0; outline: 1px solid #0000e8; outline-offset: -1px; }
.h-group { left: -2px; top: -4px; width: 210px; height: 36px; }
.hscroll { margin-top: auto; display: flex; align-items: center; height: 18px; background: #efefef; color: #999; border-bottom: 1px solid #c9c9c9; }
.hscroll svg { width: 9px; height: 9px; margin: 0 4px; }
.hscroll i { width: 134px; height: 17px; background: #cdcdcd; margin-right: auto; }
.filter { display: flex; align-items: flex-start; height: 33px; padding: 5px 0 0 9px; }
.filter .bracket { width: 4px; height: 23px; margin: 0 -1px 0 14px; border: 1px solid #ccc; border-right: 0; }
.filter .tag { margin-top: 3px; height: 17px; line-height: 17px; width: 60px; text-align: center; background: #f9cfa6; color: #111; border-radius: 1px; }
.filter .eq { margin: 3px 0 0 6px; color: #999; width: 10px; text-align: center; font-size: 16px; }
.filter .ghost { margin: 3px 0 0 4px; width: 11px; height: 17px; color: #ccc; background: linear-gradient(90deg, #e2f3e6, #fff); text-align: center; }
.filter button { margin-top: 6px; height: 10px; display: flex; }
.filter button svg { height: 10px; fill: #333; }
.filter button:nth-of-type(1) { width: 16px; margin-left: 8px; }
.filter button:nth-of-type(2) { width: 12px; margin-left: 16px; }
.filter button:nth-of-type(3) { width: 10px; margin-left: 19px; }

.work { flex: 1; min-width: 0; display: flex; flex-direction: column; }
.view-tools { display: flex; align-items: center; height: 25px; padding-left: 1px; gap: 1px; }
.view-tools button { width: 22px; height: 22px; display: flex; align-items: center; justify-content: center; }
.view-tools button.on { background: #dcdcdc; }
.view-tools button.lead { margin-left: 3px; }
.pick { position: relative; display: flex; }
.pick select { appearance: none; width: 100%; background: #fff; border: 1px solid #a6a6a6; padding: 0 18px 0 3px; height: 22px; }
.pick::after { content: ""; position: absolute; right: 5px; top: 10px; width: 5px; height: 3px; background: #222; clip-path: polygon(0 0, 100% 0, 50% 100%); }
.pick::before { content: ""; position: absolute; right: 15px; top: 1px; bottom: 1px; width: 1px; background: #a6a6a6; pointer-events: none; }
.pick.zoom { width: 100px; margin: 0 3px; }
.pick.zoom select { padding-left: 10px; }

.panes { flex: 1; display: flex; min-height: 0; }
.viewer { flex: 1; min-width: 0; display: grid; grid-template-columns: minmax(0, 1fr) 17px; grid-template-rows: minmax(0, 1fr) 17px; background: #f0f0f0; color: #ccc; }
.canvas { background: #999; padding: 20px; display: flex; flex-direction: column; gap: 40px; }
.vbar { display: flex; flex-direction: column; justify-content: space-between; align-items: center; padding: 4px 0; }
.hbar { display: flex; justify-content: space-between; align-items: center; padding: 0 4px; }
.vbar svg, .hbar svg { width: 9px; height: 9px; }

.page { height: 404px; background: #fff; padding: 7px 24px 0 23px; font-size: 4px; line-height: 5px; color: #777; display: flex; flex-direction: column; }
.redbar { height: 4px; background: #b9061a; }
.logo { width: 60px; height: 34px; margin: 11px -6px 0 auto; flex: none; }
.page-head { display: flex; justify-content: space-between; height: 89px; }
.page address { font-style: normal; padding: 22px 0 0 3px; font-size: 5px; display: flex; flex-direction: column; white-space: pre; color: #555; }
.sender { text-align: right; margin-right: -3px; padding-top: 4px; line-height: 4px; }
.sender p { margin-bottom: 6px; }
.sender p:nth-child(3) { margin-bottom: 2px; }
.sender strong { display: block; font-size: 5px; line-height: 5px; color: #333; font-weight: 600; }
.sender small { display: block; font-size: 4px; line-height: 6px; }
.page em { font-style: normal; }
.glow { background: #fdf6a6; }
.refno { font-size: 5px; line-height: 7px; color: #555; display: flex; padding: 1px; margin-bottom: 16px; }
.refno em { margin-left: 2px; }
.refno.marked { margin: -1px 0 17px -2px; }
.refno.marked span { outline: 1px dashed #3a3af0; padding: 0 1px; }
.refno.marked em { position: relative; outline: 1px solid #1818f0; background: #eceaa8; padding: 0 1px; margin-left: 1px; }
.refno.marked em::before { content: ""; position: absolute; left: -12px; top: -4px; width: 27px; height: 4px; background: #2626f0; }
.totals { border-collapse: collapse; margin-left: 51px; width: 107px; font-size: 5px; table-layout: fixed; line-height: 5px; }
.totals td { padding: 0; height: 5px; text-align: right; white-space: nowrap; }
.totals td:nth-child(1) { width: 46px; }
.totals td:nth-child(2) { width: 29px; padding-right: 5px; }
.totals .total td { font-weight: 700; color: #333; height: 8px; }
.totals .total td + td { border-top: 1px solid #111; }
.totals .glowing td + td { background: #fdf6a6; }
.page footer { margin-top: auto; margin-bottom: 15px; border-top: 2px solid #df8087; text-align: right; line-height: 7px; color: #aaa; }

.details { width: 344px; margin: 1px 0 0 4px; padding: 5px 1px 0; border-left: 2px solid #777; background: #f8f8f8; }
.details h3 { display: flex; align-items: center; height: 17px; margin-top: 10px; padding: 0 1px 0 4px; background: #f0f0f0; line-height: 17px; white-space: nowrap; }
.details section:first-child h3 { margin-top: 0; }
.details h3 svg { width: 9px; height: 9px; margin-right: 7px; color: #555; }
.details h3 i { width: 10px; height: 1px; background: #a8a8a8; }
.details h3 i.grow { flex: 1; }
.linkrow { height: 35px; padding-top: 10px; text-align: center; }
.linkrow a { color: #0a62c4; }
.row { display: flex; align-items: center; padding: 3px 3px 3px 10px; min-height: 27px; }
.row > label { width: 118px; line-height: 21px; align-self: flex-start; white-space: nowrap; }
.row.check { padding-bottom: 0; min-height: 24px; }
.row.check .ctl { align-self: flex-start; }
.row.active { background: #dcebfc; }
.ctl { position: relative; flex: 1; min-width: 0; }
.row.active .ctl { z-index: 1; }
.ctl input[type="text"], .ctl textarea { width: 100%; height: 21px; display: block; border: 1px solid #a6a6a6; background: #fff; padding: 0 4px; line-height: 19px; }
.ctl textarea { height: 55px; }
.row.off input, .row.off textarea { background: #f8f8f8; border-color: #cdcdcd; color: #9a9a9a; }
.row.right input[type="text"] { text-align: right; }
.row.active input[type="text"] { border-color: #0b62b8; background: #dcebfc; color: #000; }
.row.narrow .ctl { flex: none; width: 189px; }
.row.narrow select { height: 21px; }
.row.check:not(.source) .ctl { padding-top: 5px; }
.row.date .ctl::after { content: ""; position: absolute; right: 6px; top: 9px; width: 5px; height: 3px; background: #222; clip-path: polygon(0 0, 100% 0, 50% 100%); }
.caret { position: absolute; left: 24px; top: 3px; width: 1px; height: 15px; background: #000; }
.badge { width: 16px; height: 16px; margin: 0 5px 0 -1px; flex: none; }
.badge.rzl { border-radius: 50%; background: #666; color: #fff; font: italic 700 7px/16px "Liberation Sans", Arial, sans-serif; text-align: center; }
.row button { width: 16px; height: 16px; margin-left: 6px; }
.row button + button { margin: 0 -1px 0 3px; }
.row button svg { width: 16px; height: 16px; display: block; color: #5a5a5a; }
.row.off button { --accent: #a8a8a8; --mesh: transparent; }
.row.off button svg { color: #a8a8a8; }
.h-no { left: -5px; top: -13px; width: 39px; height: 43px; }
</style>
